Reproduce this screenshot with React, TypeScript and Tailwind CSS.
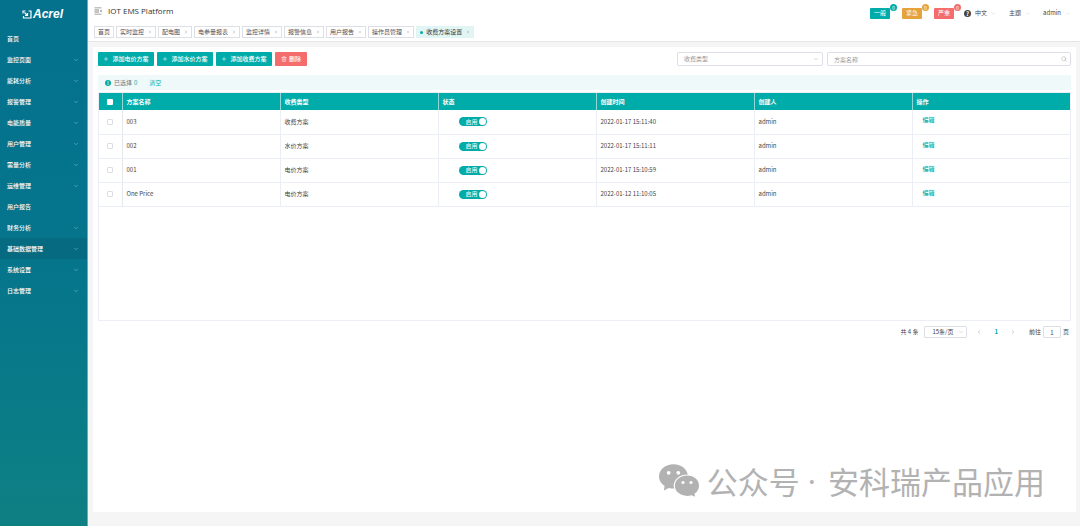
import { useState } from 'react';
import { ChevronDown, ChevronLeft, ChevronRight, Plus, Search, Trash2, X } from 'lucide-react';
import clsx from 'clsx';

interface Plan {
  name: string;
  type: string;
  createdAt: string;
  creator: string;
}

const menu = [
  { label: '首页', leaf: true },
  { label: '监控页面' },
  { label: '能耗分析' },
  { label: '报警管理' },
  { label: '电能质量' },
  { label: '用户管理' },
  { label: '需量分析' },
  { label: '运维管理' },
  { label: '用户报告', leaf: true },
  { label: '财务分析' },
  { label: '基础数据管理', active: true },
  { label: '系统设置' },
  { label: '日志管理' },
];

const tabs = [
  '首页',
  '实时监控',
  '配电图',
  '电参量报表',
  '监控详情',
  '报警信息',
  '用户报告',
  '操作员管理',
  '收费方案设置',
];

const alarms = [
  { label: '一般', color: 'bg-[#00aca9]' },
  { label: '紧急', color: 'bg-[#e6a23c]' },
  { label: '严重', color: 'bg-[#f56c6c]' },
];

const columns = ['方案名称', '收费类型', '状态', '创建时间', '创建人', '操作'];

const plans: Plan[] = [
  { name: '003', type: '收费方案', createdAt: '2022-01-17 15:11:40', creator: 'admin' },
  { name: '002', type: '水价方案', createdAt: '2022-01-17 15:11:11', creator: 'admin' },
  { name: '001', type: '电价方案', createdAt: '2022-01-17 15:10:59', creator: 'admin' },
  { name: 'One Price', type: '电价方案', createdAt: '2022-01-12 11:10:05', creator: 'admin' },
];

function Logo() {
  return (
    <div className="flex h-7 items-center justify-center gap-px pr-[2px] text-white">
      <svg viewBox="0 0 20 18" className="h-[9px] w-[10px]" fill="none" stroke="currentColor" strokeWidth="2.4">
        <path d="M1 2h6M2 2v5" />
        <path d="M13 2h5v14H3v-4" />
        <path d="M5 5l5 5M11 6v5H6" />
      </svg>
      <span className="font-['Liberation_Sans',sans-serif] text-[12px] leading-3 font-bold italic">Acrel</span>
    </div>
  );
}

function Sidebar() {
  return (
    <aside className="w-[88px] shrink-0 border-r border-[#5fb0bd] bg-linear-to-b from-[#04718d] via-[#05758c] to-[#0e8083]">
      <Logo />
      <nav>
        {menu.map((item) => (
          <a
            key={item.label}
            href="#"
            className={clsx(
              'flex h-[21px] items-center justify-between pr-2 pl-[7px] font-medium text-white',
              item.active && 'bg-[#066a80]'
            )}
          >
            {item.label}
            {!item.leaf && <ChevronDown className="size-[6px] text-[#8cc4cf]" />}
          </a>
        ))}
      </nav>
    </aside>
  );
}

function Header() {
  return (
    <header className="h-[42px] border-b border-[#e6e6e6] bg-white">
      <div className="flex h-[26px] items-start justify-between pr-[10px] pl-[6px]">
        <div className="flex h-[22px] items-center gap-[6px]">
          <svg viewBox="0 0 8 8" className="size-[8px]" fill="#888">
            <path d="M0.500 0.500h7v0.800h-7zM0.500 2.600h4.500v0.800h-4.500zM0.500 4.600h4.500v0.800h-4.500zM0.500 6.700h7v0.800h-7z" />
            <path d="M7.500 2.600v2.800L5.900 4z" />
          </svg>
          <h1 className="font-['Open_Sans',sans-serif] text-[8px] leading-3 font-medium text-[#333]">
            IOT EMS Platform
          </h1>
        </div>
        <div className="flex h-[26px] items-center text-[#444]">
          <div className="flex gap-3">
            {alarms.map((alarm) => (
              <button
                key={alarm.label}
                className={clsx('relative h-[11px] w-5 rounded-[1px] text-center text-white', alarm.color)}
              >
                {alarm.label}
                <span
                  className={clsx(
                    'absolute -top-1 -right-[7px] size-[7px] rounded-full text-[5px] leading-[7px]',
                    alarm.color
                  )}
                >
                  0
                </span>
              </button>
            ))}
          </div>
          <span className="mr-1 ml-[10px] size-[7px] rounded-full bg-[#444] text-center text-[6px] leading-[7px] font-bold text-white">
            ?
          </span>
          <div className="flex gap-[13px]">
            {['中文', '主题', 'admin'].map((label) => (
              <button key={label} className="flex items-center gap-1">
                {label}
                <ChevronDown className="size-[5px] text-[#bbb]" />
              </button>
            ))}
          </div>
        </div>
      </div>
      <nav className="flex gap-[2px] pl-[6px]">
        {tabs.map((tab, i) => {
          const active = i === tabs.length - 1;
          return (
            <a
              key={tab}
              href="#"
              className={clsx(
                'flex h-3 items-center border px-[3px]',
                active ? 'border-[#dff5f4] bg-[#e0f5f4] text-[#333]' : 'border-[#dcdfe6] text-[#495060]'
              )}
            >
              {active && <span className="mr-[3px] size-[3px] rounded-full bg-[#00aca9]" />}
              {tab}
              {i > 0 && <X className="ml-1 size-1 text-[#999]" />}
            </a>
          );
        })}
      </nav>
    </header>
  );
}

function Toolbar() {
  return (
    <div className="flex h-[14px] justify-between">
      <div className="flex gap-[3px]">
        {['添加电价方案', '添加水价方案', '添加收费方案'].map((label) => (
          <button
            key={label}
            className="flex w-14 items-center justify-center gap-[3px] rounded-[1px] bg-[#00aca9] font-medium text-white"
          >
            <Plus className="size-[6px]" />
            {label}
          </button>
        ))}
        <button className="flex w-8 items-center justify-center gap-[2px] rounded-[1px] bg-[#f56c6c] font-medium text-white">
          <Trash2 className="size-[6px]" />
          删除
        </button>
      </div>
      <div className="flex gap-1">
        <div className="relative">
          <select
            aria-label="收费类型"
            className="h-[14px] w-[146px] appearance-none rounded-[2px] border border-[#dcdfe6] bg-white px-[6px] text-[#999]"
          >
            <option>收费类型</option>
          </select>
          <ChevronDown className="pointer-events-none absolute top-1 right-1 size-[6px] text-[#aaa]" />
        </div>
        <div className="relative">
          <input
            aria-label="方案名称"
            placeholder="方案名称"
            className="h-[14px] w-[244px] rounded-[2px] border border-[#dcdfe6] px-[6px] placeholder:text-[#999]"
          />
          <Search className="pointer-events-none absolute top-1 right-1 size-[6px] text-[#aaa]" />
        </div>
      </div>
    </div>
  );
}

function StatusSwitch() {
  const [on, setOn] = useState(true);
  return (
    <button
      role="switch"
      aria-checked={on}
      onClick={() => setOn(!on)}
      className={clsx(
        'flex h-[9px] w-7 items-center rounded-full px-px text-white',
        on ? 'justify-end bg-[#00aca9]' : 'flex-row-reverse justify-end bg-[#bbb]'
      )}
    >
      <span className="mr-px">{on ? '启用' : '停用'}</span>
      <span className="size-[7px] rounded-full bg-white" />
    </button>
  );
}

function PlanTable() {
  return (
    <div className="mt-[2px] h-[229px] border border-[#ebeef5]">
      <table className="w-full table-fixed border-collapse text-left">
        <thead>
          <tr className="h-[17px] bg-[#00aca9] text-white">
            <th className="w-[23px] border-r border-[#8fd8d6]">
              <input
                type="checkbox"
                aria-label="全选"
                className="mx-auto block size-[6px] appearance-none rounded-[1px] bg-white"
              />
            </th>
            {columns.map((column) => (
              <th key={column} className="border-r border-[#8fd8d6] pl-1 font-bold last:border-r-0">
                {column}
              </th>
            ))}
          </tr>
        </thead>
        <tbody>
          {plans.map((plan) => (
            <tr key={plan.name} className="h-6 border-b border-[#ebeef5] text-[#444]">
              <td className="border-r border-[#e4e7ed]">
                <input
                  type="checkbox"
                  aria-label={plan.name}
                  className="mx-auto block size-[6px] appearance-none rounded-[1px] border border-[#dcdfe6]"
                />
              </td>
              <td className="border-r border-[#ebeef5] pl-1">{plan.name}</td>
              <td className="border-r border-[#ebeef5] pl-1">{plan.type}</td>
              <td className="border-r border-[#ebeef5] pl-5">
                <StatusSwitch />
              </td>
              <td className="border-r border-[#ebeef5] pl-1">{plan.createdAt}</td>
              <td className="border-r border-[#ebeef5] pl-1">{plan.creator}</td>
              <td className="pb-[3px] pl-[10px]">
                <a href="#" className="font-medium text-[#00aca9]">
                  编辑
                </a>
              </td>
            </tr>
          ))}
        </tbody>
      </table>
    </div>
  );
}

function Pagination() {
  return (
    <div className="mt-[5px] flex h-3 items-center justify-end pr-[2px] text-[#444]">
      <span>共 4 条</span>
      <div className="relative ml-[6px]">
        <select
          aria-label="每页条数"
          className="block h-3 w-[43px] appearance-none rounded-[1px] border border-[#dcdfe6] bg-white pl-[7px]"
        >
          <option>15条/页</option>
        </select>
        <ChevronDown className="pointer-events-none absolute top-[3px] right-[3px] size-[6px] text-[#bbb]" />
      </div>
      <button aria-label="上一页" className="ml-[9px]">
        <ChevronLeft className="size-[6px] text-[#999]" />
      </button>
      <button className="mx-3 font-bold text-[#00aca9]">1</button>
      <button aria-label="下一页" className="mr-[13px]">
        <ChevronRight className="size-[6px] text-[#999]" />
      </button>
      <label className="flex items-center gap-[2px]">
        前往
        <input defaultValue="1" className="h-3 w-[18px] rounded-[1px] border border-[#dcdfe6] text-center" />
        页
      </label>
    </div>
  );
}

function Watermark() {
  return (
    <div className="mt-auto flex h-[62px] items-center justify-end pr-[26px] text-[31px] leading-[30px] font-normal text-[#b2b2b2]">
      <svg viewBox="0 0 41 34" className="mr-[7px] h-[34px] w-[41px]" fill="#b2b2b2">
        <path d="M14.500 0.300C6.500 0.300 0 5.700 0 12.500c0 3.800 2 7.200 5.600 9.600L4.800 26.500l5-2.600c1.500.4 3 .7 4.700.7 8 0 14.500-5.400 14.500-12.100S22.500 0.300 14.500 0.300z" />
        <path
          stroke="#fff"
          strokeWidth="1.200"
          d="M28.300 11c-7.200 0-13 4.700-13 10.800s5.800 10.700 13 10.700c1.500 0 3-.2 4.300-.6l4.300 2-.8-3.900c2.800-1.900 4.500-4.900 4.500-8.200 0-6.100-5.200-10.800-12.300-10.800z"
        />
        <g fill="#fff">
          <circle cx="9.700" cy="8.800" r="1.900" />
          <circle cx="19.300" cy="8.800" r="1.900" />
          <circle cx="24" cy="18.500" r="1.600" />
          <circle cx="32" cy="18.500" r="1.600" />
        </g>
      </svg>
      <span>公众号</span>
      <span className="mr-3 ml-2 font-['Open_Sans',sans-serif]">·</span>
      <span>安科瑞产品应用</span>
    </div>
  );
}

export default function App() {
  return (
    <div className="flex min-h-screen bg-[#f5f5f5] font-['Noto_Sans_CJK_SC',sans-serif] text-[6px] leading-[8px]">
      <Sidebar />
      <div className="flex min-w-0 flex-1 flex-col">
        <Header />
        <main className="mr-1 ml-[5px] mt-[5px] mb-[14px] flex flex-1 flex-col bg-white px-[5px] pt-[5px]">
          <Toolbar />
          <div className="mt-[9px] flex h-[15px] items-center bg-[#eff9fa] pl-[7px] text-[#777]">
            <span className="mr-[3px] size-[6px] rounded-full bg-[#00aca9] text-center text-[5px] leading-[6px] font-bold text-white">
              !
            </span>
            已选择
            <span className="ml-[2px] text-[#00aca9]">0</span>
            <button className="ml-3 text-[#00aca9]">清空</button>
          </div>
          <PlanTable />
          <Pagination />
          <Watermark />
        </main>
      </div>
    </div>
  );
}
